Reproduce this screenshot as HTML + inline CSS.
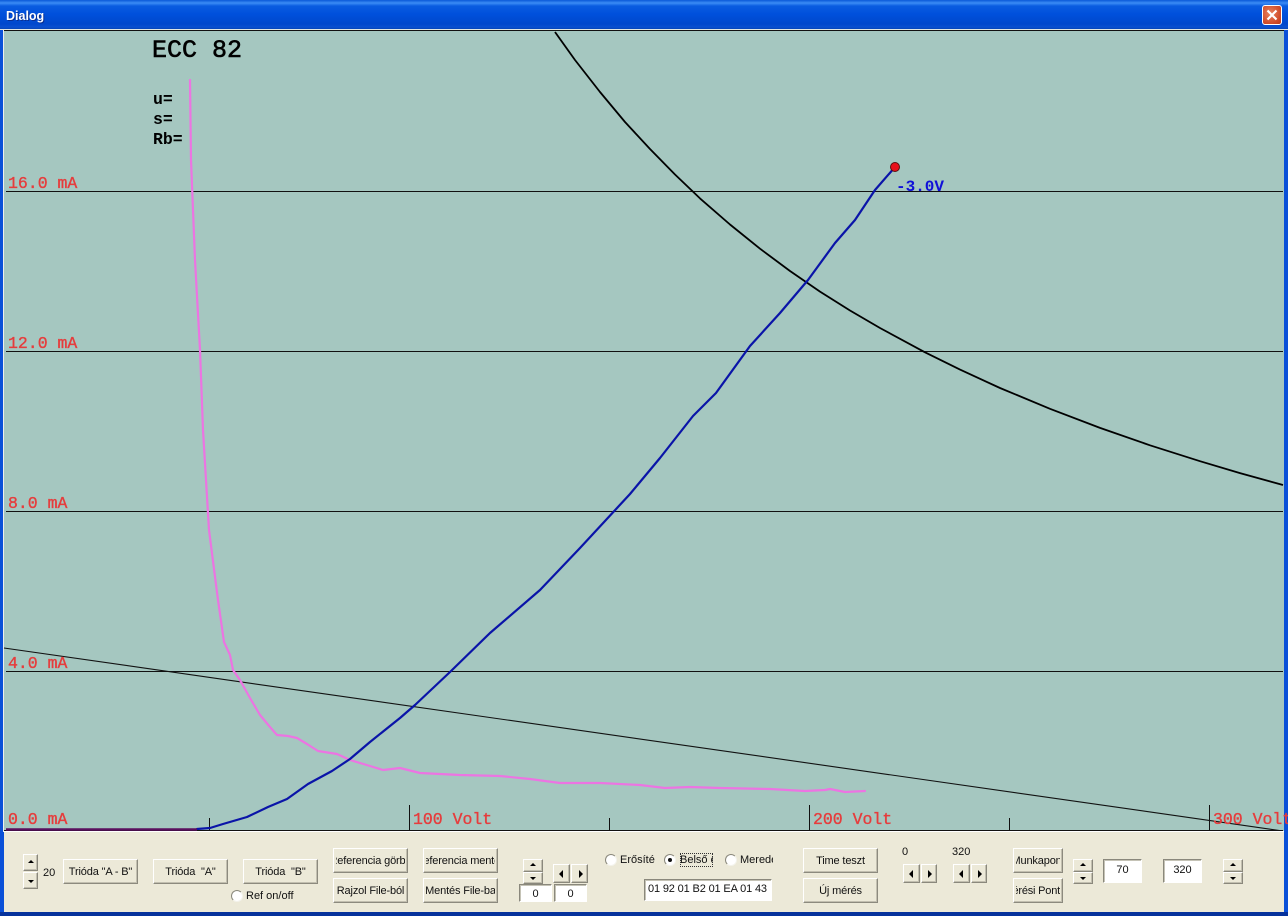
<!DOCTYPE html>
<html><head><meta charset="utf-8"><title>Dialog</title>
<style>
html,body{margin:0;padding:0;width:1288px;height:916px;overflow:hidden;background:#ece9d8}
body{position:relative;font:11px "Liberation Sans",sans-serif;color:#111}
#title{position:absolute;left:0;top:0;width:1288px;height:29px;background:linear-gradient(#0a58d8 0,#3b8cf5 3px,#0a5ce0 6px,#0050dc 14px,#0048cc 24px,#0a50d0 27px,#0544b8 29px);box-shadow:0 1px 0 #dfe6e4}
#title b{position:absolute;left:6px;top:9px;color:#fff;font:bold 12.500px "Liberation Sans",sans-serif;text-shadow:1px 1px 0 #0a2f90}
#x{position:absolute;left:1262px;top:5px;width:18px;height:18px;border:1px solid #fff;border-radius:3px;background:radial-gradient(circle at 40% 40%,#e8835f,#cf4a28 70%,#b83a1c)}
#l,#r{position:absolute;top:30px;width:4px;height:886px;background:#0a50d8}
#l{left:0}#r{left:1284px}
#bt{position:absolute;left:0;top:912px;width:1288px;height:4px;background:#06329c}
svg#p{position:absolute;left:0;top:30px}
.b,.e,.s,.t{position:absolute;box-sizing:border-box}
.b{height:25px;width:75px;background:#ece9d8;border:1px solid;border-color:#fff #8c8a7e #8c8a7e #fff;box-shadow:inset -1px -1px 0 #c2bfb0;display:flex;align-items:center}
.b span{display:flex;justify-content:center;overflow:hidden;white-space:nowrap;width:100%;margin:0 2px;line-height:14px;letter-spacing:-.15px}
.e{background:#fff;border:1px solid;border-color:#8a887c #fff #fff #8a887c;box-shadow:inset 1px 1px 0 #c5c3b6;text-align:center;line-height:20px}
.s{background:#ece9d8;border:1px solid;border-color:#fff #8a887c #8a887c #fff;box-shadow:inset -1px -1px 0 #c2bfb0}
.s:after{content:"";position:absolute;width:0;height:0}
.u:after{left:50%;top:50%;margin:-3px 0 0 -3px;border:3px solid transparent;border-top:0;border-bottom:3px solid #000}
.d:after{left:50%;top:50%;margin:-1px 0 0 -3px;border:3px solid transparent;border-bottom:0;border-top:3px solid #000}
.lf:after{left:50%;top:50%;margin:-4px 0 0 -3px;border:4px solid transparent;border-left:0;border-right:4px solid #000}
.rt:after{left:50%;top:50%;margin:-4px 0 0 -1px;border:4px solid transparent;border-right:0;border-left:4px solid #000}
.t{white-space:nowrap;line-height:13px}
.rd{position:absolute;width:10px;height:10px;border-radius:50%;background:#fff;border:1px solid #f4f3ec;border-left-color:#8a887c;border-top-color:#8a887c}
.rd i{position:absolute;left:3px;top:3px;width:4px;height:4px;border-radius:50%;background:#111}
</style></head><body>
<div id="title"><b>Dialog</b><div id="x"><svg width="18" height="18"><path d="M4.500 4.500L13.500 13.500M13.500 4.500L4.500 13.500" stroke="#fff" stroke-width="2.200"/></svg></div></div>
<div id="l"></div><div id="r"></div><div id="bt"></div>
<svg id="p" width="1288" height="802" viewBox="0 30 1288 802" style="top:30px">
<rect x="4" y="30" width="1280" height="802" fill="#a5c7c0"/>
<path d="M4 30.500H1284" stroke="#111" stroke-width="1"/>
<path d="M3.500 30V832" stroke="#eee" stroke-width="1"/>
<path d="M6 191.500H1283M6 351.500H1283M6 511.500H1283M6 671.500H1283" stroke="#111" stroke-width="1"/>
<path d="M4 648L1283 831" stroke="#111" stroke-width="1.100" fill="none"/>
<path d="M209.500 818V831M409.500 805V831M609.500 818V831M809.500 805V831M1009.500 818V831M1209.500 805V831" stroke="#111"/>
<polyline fill="none" stroke="#000" stroke-width="1.800" stroke-linejoin="round" points="555,32 575,60 600,92 625,122 650,149 675,174.500 700,198.400 730,224.500 760,248.700 790,271 820,291.600 850,310.500 880,328 925,352.300 960,369.600 1000,388 1050,408.800 1100,427.900 1150,445.300 1200,461.200 1240,473.100 1283,485"/>
<polyline fill="none" stroke="#ec74e2" stroke-width="2.200" stroke-linejoin="round" stroke-linecap="round" points="190,80 191,160 195,260 200,350 203,430 209,530 218,600 224,642 230,655 233,670 240,680 250,698 260,715 270,727 277,735 288,736 297,738 307,744 318,751 337,754 350,760 370,766 383,770 400,768 420,773 460,775 500,776 530,779 560,783 600,783 640,785 665,788 690,787 720,788 770,789 805,791 825,790 830,789 845,792 865,791"/>
<polyline fill="none" stroke="#0a14a8" stroke-width="2.200" stroke-linejoin="round" stroke-linecap="round" points="197,829 210,828 223,824 247,817 268,807 287,799 308,784 332,771 350,759 370,742 400,718 415,705 450,672 490,633 540,590 580,548 630,494 660,458 693,416 716,393 750,346 780,313 808,280 835,243 855,220 875,190 895,167"/>
<path d="M4 830.500H1192" stroke="#111" stroke-width="1"/>
<path d="M1192 830.500H1283" stroke="#111" stroke-width="1"/>
<path d="M6 829.500H197" stroke="#5a0f5e" stroke-width="2.500"/>
<path d="M4 831.500H1284" stroke="#fff" stroke-width="1"/>
<circle cx="895" cy="167" r="4.500" fill="#e8101a" stroke="#5a1010" stroke-width="1"/>
<g font-family="Liberation Mono, monospace" font-size="16.500" fill="#e63c3c" stroke="#e63c3c" stroke-width=".35">
<text x="8" y="188">16.0 mA</text>
<text x="8" y="348">12.0 mA</text>
<text x="8" y="508">8.0 mA</text>
<text x="8" y="668">4.0 mA</text>
<text x="8" y="824">0.0 mA</text>
<text x="413" y="824">100 Volt</text>
<text x="813" y="824">200 Volt</text>
<text x="1213" y="824">300 Volt</text>
</g>
<text x="896" y="191" font-family="Liberation Mono, monospace" font-size="16" font-weight="bold" fill="#1010d8">-3.0V</text>
<text x="152" y="57" font-family="Liberation Mono, monospace" font-size="25" fill="#000" stroke="#000" stroke-width=".6">ECC 82</text>
<g font-family="Liberation Mono, monospace" font-size="16.500" font-weight="bold" fill="#000">
<text x="153" y="104">u=</text><text x="153" y="124">s=</text><text x="153" y="144">Rb=</text>
</g>
</svg>

<div class="s u" style="left:23px;top:854px;width:15px;height:17px"></div>
<div class="s d" style="left:23px;top:872px;width:15px;height:17px"></div>
<div class="t" style="left:43px;top:867px">20</div>
<div class="b" style="left:63px;top:859px"><span>Trióda "A - B"</span></div>
<div class="b" style="left:153px;top:859px"><span>Trióda &nbsp;"A"</span></div>
<div class="b" style="left:243px;top:859px"><span>Trióda &nbsp;"B"</span></div>
<div class="rd" style="left:231px;top:890px"></div>
<div class="t" style="left:246px;top:890px">Ref on/off</div>

<div class="b" style="left:333px;top:848px"><span>Referencia görbe</span></div>
<div class="b" style="left:333px;top:878px"><span>Rajzol File-ból</span></div>
<div class="b" style="left:423px;top:848px"><span>Referencia mentés</span></div>
<div class="b" style="left:423px;top:878px"><span>Mentés File-ba</span></div>

<div class="s u" style="left:523px;top:859px;width:20px;height:13px"></div>
<div class="s d" style="left:523px;top:872px;width:20px;height:12px"></div>
<div class="s lf" style="left:553px;top:864px;width:17px;height:19px"></div>
<div class="s rt" style="left:571px;top:864px;width:17px;height:19px"></div>
<div class="e" style="left:519px;top:884px;width:33px;height:18px;line-height:18px">0</div>
<div class="e" style="left:554px;top:884px;width:33px;height:18px;line-height:18px">0</div>

<div class="rd" style="left:605px;top:854px"></div>
<div class="t" style="left:620px;top:854px">Erősíté</div>
<div class="rd" style="left:664px;top:854px"><i></i></div>
<div class="t" style="left:680px;top:853px;width:33px;height:14px;line-height:14px;overflow:hidden;outline:1px dotted #333;outline-offset:-1px">Belső érték</div>
<div class="rd" style="left:725px;top:854px"></div>
<div class="t" style="left:740px;top:854px;width:33px;overflow:hidden">Meredekség</div>
<div class="e" style="left:644px;top:879px;width:128px;height:22px;text-align:left;padding-left:3px;line-height:18px;letter-spacing:-.15px">01 92 01 B2 01 EA 01 43</div>

<div class="b" style="left:803px;top:848px"><span>Time teszt</span></div>
<div class="b" style="left:803px;top:878px"><span>Új mérés</span></div>

<div class="t" style="left:902px;top:846px">0</div>
<div class="t" style="left:952px;top:846px">320</div>
<div class="s lf" style="left:903px;top:864px;width:17px;height:19px"></div>
<div class="s rt" style="left:921px;top:864px;width:16px;height:19px"></div>
<div class="s lf" style="left:953px;top:864px;width:17px;height:19px"></div>
<div class="s rt" style="left:971px;top:864px;width:16px;height:19px"></div>

<div class="b" style="left:1013px;top:848px;width:50px"><span>Munkapont</span></div>
<div class="b" style="left:1013px;top:878px;width:50px"><span style="letter-spacing:-.2px;justify-content:flex-end">Mérési Pont</span></div>
<div class="s u" style="left:1073px;top:859px;width:20px;height:13px"></div>
<div class="s d" style="left:1073px;top:872px;width:20px;height:12px"></div>
<div class="e" style="left:1103px;top:859px;width:39px;height:24px">70</div>
<div class="e" style="left:1163px;top:859px;width:39px;height:24px">320</div>
<div class="s u" style="left:1223px;top:859px;width:20px;height:13px"></div>
<div class="s d" style="left:1223px;top:872px;width:20px;height:12px"></div>
</body></html>
